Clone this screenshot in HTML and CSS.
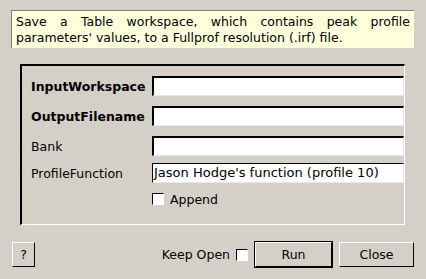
FILE: index.html
```html
<!DOCTYPE html>
<html>
<head>
<meta charset="utf-8">
<link rel="stylesheet" href="styles.css">
</head>
<body>
<div class="dialog">
  <div class="desc">Save a Table workspace, which contains peak profile parameters' values, to a Fullprof resolution (.irf) file.</div>
  <div class="group">
    <div class="row">
      <span class="label bold">InputWorkspace</span>
      <span class="field"></span>
    </div>
    <div class="row">
      <span class="label bold">OutputFilename</span>
      <span class="field"></span>
    </div>
    <div class="row">
      <span class="label">Bank</span>
      <span class="field"></span>
    </div>
    <div class="row combo-row">
      <span class="label">ProfileFunction</span>
      <span class="field combo">Jason Hodge's function (profile 10)</span>
    </div>
    <div class="row check-row">
      <span class="label"></span>
      <span class="check-wrap"><span class="checkbox"></span><span class="check-label">Append</span></span>
    </div>
  </div>
  <div class="buttons">
    <span class="btn help">?</span>
    <span class="spacer"></span>
    <span class="keep">Keep Open</span>
    <span class="checkbox keep-box"></span>
    <span class="btn run">Run</span>
    <span class="btn close">Close</span>
  </div>
</div>
</body>
</html>
```

FILE: styles.css
```css
html, body {
  margin: 0;
  padding: 0;
  background: #d4d0c8;
}
body {
  width: 426px;
  height: 279px;
  overflow: hidden;
  font-family: "DejaVu Sans", sans-serif;
  font-size: 12.5px;
  color: #000;
}
.dialog {
  display: flex;
  flex-direction: column;
}
.desc {
  margin: 10px 12px 0 11px;
  height: 38px;
  box-sizing: border-box;
  border-top: 1px solid #808080;
  border-left: 1px solid #808080;
  background: #ffffdc;
  padding: 3px 4px 0 4px;
  line-height: 16px;
  text-align: justify;
}
.group {
  margin: 16px 0 0 20px;
  width: 385px;
  height: 161px;
  box-sizing: border-box;
  border-top: 2px solid #000;
  border-left: 2px solid #000;
  border-right: 1px solid #fff;
  border-bottom: 1px solid #fff;
  padding: 10px 0 0 9px;
  display: flex;
  flex-direction: column;
  gap: 10px;
  overflow: hidden;
}
.row {
  display: flex;
  align-items: center;
  height: 20px;
}
.combo-row {
  margin-top: -3px;
}
.check-row {
  margin-top: -1px;
  height: 14px;
}
.label {
  width: 121px;
  flex: none;
  white-space: nowrap;
}
.bold {
  font-weight: bold;
}
.field {
  flex: 1;
  height: 20px;
  box-sizing: border-box;
  background: #fff;
  border-top: 2px solid #000;
  border-left: 2px solid #000;
  border-bottom: 1px solid #e8e8e8;
  border-right: 1px solid #e8e8e8;
}
.combo {
  line-height: 17px;
  padding-left: 1px;
  border-top-width: 1px;
  border-left-width: 1px;
  white-space: nowrap;
  font-size: 13px;
}
.check-wrap {
  display: flex;
  align-items: center;
  gap: 6px;
}
.checkbox {
  display: inline-block;
  width: 12px;
  height: 12px;
  box-sizing: border-box;
  background: #fff;
  border-top: 1px solid #000;
  border-left: 1px solid #000;
  border-right: 1px solid #fff;
  border-bottom: 1px solid #fff;
}
.buttons {
  margin: 17px 12px 0 12px;
  display: flex;
  align-items: center;
  height: 25px;
}
.spacer {
  flex: 1;
}
.btn {
  height: 25px;
  box-sizing: border-box;
  display: flex;
  align-items: center;
  justify-content: center;
  border-top: 1px solid #fff;
  border-left: 1px solid #fff;
  border-right: 1px solid #000;
  border-bottom: 1px solid #000;
}
.help {
  width: 23px;
}
.keep {
  margin-right: 6px;
}
.keep-box {
  margin-right: 7px;
}
.run {
  width: 77px;
  outline: 1px solid #000;
}
.close {
  width: 75px;
  margin-left: 7px;
}
```
